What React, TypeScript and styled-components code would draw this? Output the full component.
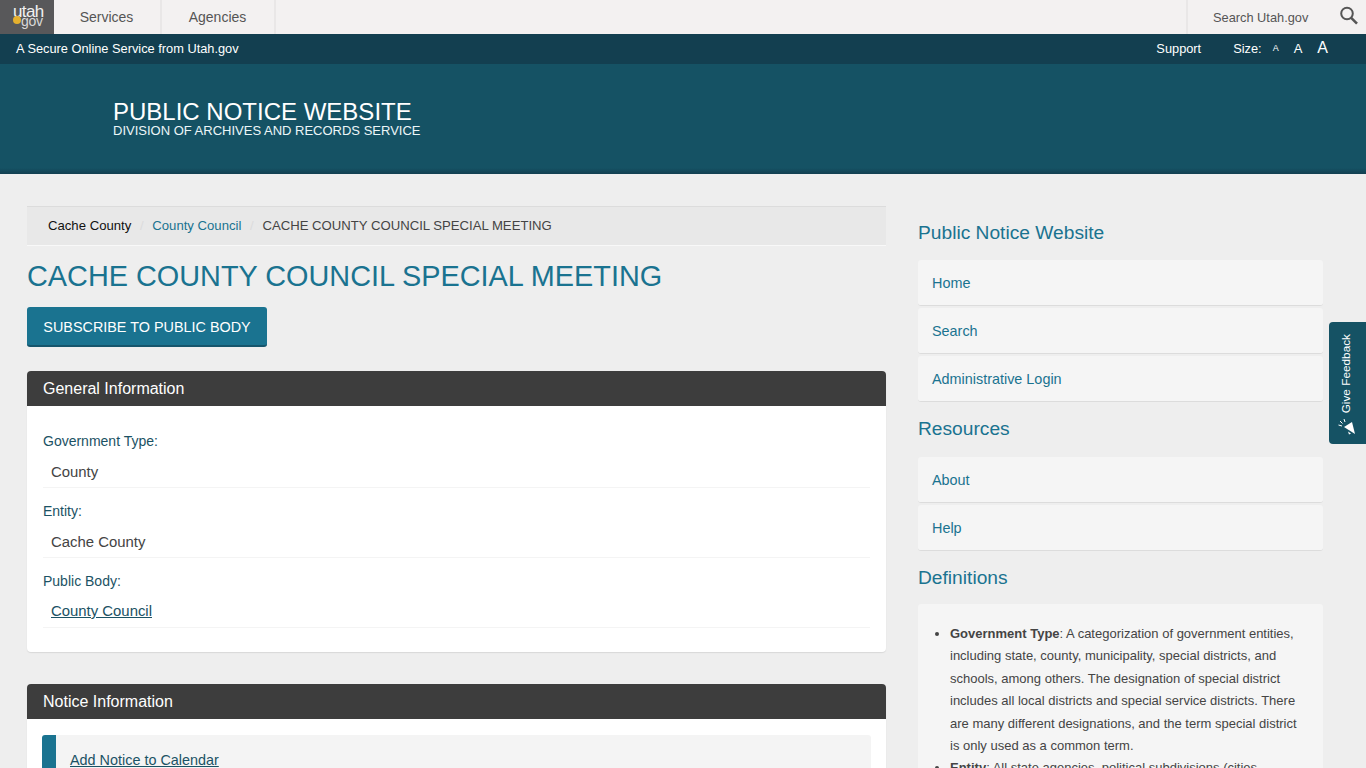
import React from "react";
import styled, { createGlobalStyle } from "styled-components";

const GlobalStyle = createGlobalStyle`
  html, body {
    margin: 0;
    height: 768px;
    overflow: hidden;
    background: #eeeeee;
    font-family: "Liberation Sans", Arial, sans-serif;
  }
  * { box-sizing: border-box; }
`;

const App = () => {
  return (
    <Page>
      <GlobalStyle />
      <TopBar>
        <LogoBox>
          <LogoUtah>utah</LogoUtah>
          <LogoGov>gov</LogoGov>
          <svg width="30" height="26" viewBox="0 0 30 26" aria-hidden="true">
            <circle cx="8" cy="17" r="4" fill="#e5b02e" />
          </svg>
        </LogoBox>
        <NavItem $width={108}>Services</NavItem>
        <NavItem $width={114}>Agencies</NavItem>
        <TopSpacer />
        <SearchBox>
          <span>Search Utah.gov</span>
          <svg width="20" height="20" viewBox="0 0 20 20" fill="none" stroke="#555" strokeWidth="2">
            <circle cx="8" cy="7.5" r="5.8" />
            <path d="M12.2 11.8 18 17.6" strokeWidth="2.6" />
          </svg>
        </SearchBox>
      </TopBar>
      <SecureBar>
        <span>A Secure Online Service from Utah.gov</span>
        <SecureRight>
          <span>Support</span>
          <SizeRow>
            <span>Size:</span>
            <SizeA $size={9} $left={11}>A</SizeA>
            <SizeA $size={13} $left={15}>A</SizeA>
            <SizeA $size={16} $left={15}>A</SizeA>
          </SizeRow>
        </SecureRight>
      </SecureBar>
      <Banner>
        <BannerTitle>PUBLIC NOTICE WEBSITE</BannerTitle>
        <BannerSub>DIVISION OF ARCHIVES AND RECORDS SERVICE</BannerSub>
      </Banner>

      <Columns>
        <MainCol>
          <Breadcrumb>
            <Crumb $tone="#111">Cache County</Crumb>
            <Slash>/</Slash>
            <Crumb $tone="#1a7390">County Council</Crumb>
            <Slash>/</Slash>
            <Crumb $tone="#444">CACHE COUNTY COUNCIL SPECIAL MEETING</Crumb>
          </Breadcrumb>
          <PageTitle>CACHE COUNTY COUNCIL SPECIAL MEETING</PageTitle>
          <SubscribeButton>SUBSCRIBE TO PUBLIC BODY</SubscribeButton>

          <Panel>
            <PanelHead>General Information</PanelHead>
            <PanelBody>
              <FieldLabel>Government Type:</FieldLabel>
              <FieldValue>County</FieldValue>
              <FieldLabel>Entity:</FieldLabel>
              <FieldValue>Cache County</FieldValue>
              <FieldLabel>Public Body:</FieldLabel>
              <FieldValue $raised>
                <PlainLink>County Council</PlainLink>
              </FieldValue>
            </PanelBody>
          </Panel>

          <Panel>
            <PanelHead>Notice Information</PanelHead>
            <NoticeBody>
              <Callout>
                <PlainLink>Add Notice to Calendar</PlainLink>
              </Callout>
            </NoticeBody>
          </Panel>
        </MainCol>

        <SideCol>
          <SideHeading $after={15}>Public Notice Website</SideHeading>
          <SideList>
            <SideLink>Home</SideLink>
            <SideLink>Search</SideLink>
            <SideLink>Administrative Login</SideLink>
          </SideList>
          <SideHeading $after={16}>Resources</SideHeading>
          <SideList>
            <SideLink>About</SideLink>
            <SideLink>Help</SideLink>
          </SideList>
          <SideHeading $after={14}>Definitions</SideHeading>
          <DefinitionCard>
            <DefinitionList>
              <li>
                <b>Government Type</b>: A categorization of government entities, including state, county,
                municipality, special districts, and schools, among others. The designation of special
                district includes all local districts and special service districts. There are many
                different designations, and the term special district is only used as a common term.
              </li>
              <li>
                <b>Entity</b>: All state agencies, political subdivisions (cities, counties, towns and
                special districts) that are subject to the act.
              </li>
            </DefinitionList>
          </DefinitionCard>
        </SideCol>
      </Columns>

      <FeedbackTab>
        <FeedbackText>Give Feedback</FeedbackText>
        <svg width="20" height="20" viewBox="0 0 20 20" aria-hidden="true">
          <path d="M6 9 14 4 17 16Z" fill="#fff" />
          <path d="M10 13.5 11 16.5 13 15.5" fill="#fff" />
          <path d="M2 3 4.5 5.5M.5 7 4 8M6 1 7 4" stroke="#fff" strokeWidth="1" />
        </svg>
      </FeedbackTab>
    </Page>
  );
};

export default App;

const Page = styled.div`
  position: relative;
  height: 768px;
  overflow: hidden;
  background: #eeeeee;
`;

const TopBar = styled.div`
  display: flex;
  height: 34px;
  background: #f3f1f1;
`;

const LogoBox = styled.div`
  position: relative;
  width: 54px;
  height: 34px;
  background: #58585a;
  color: #fff;
  svg {
    position: absolute;
    left: 9px;
    top: 3px;
  }
`;

const LogoUtah = styled.span`
  position: absolute;
  left: 13px;
  top: 3px;
  font-size: 17px;
  line-height: 17px;
  letter-spacing: -0.6px;
  color: #f1f1f1;
`;

const LogoGov = styled.span`
  position: absolute;
  left: 21px;
  top: 14px;
  font-size: 14px;
  line-height: 14px;
  letter-spacing: -0.3px;
  color: #d8d8d8;
`;

const NavItem = styled.div<{ $width: number }>`
  width: ${(p) => p.$width}px;
  display: flex;
  align-items: center;
  justify-content: center;
  padding-right: 1px;
  font-size: 14px;
  color: #555;
  border-right: 2px solid #e9e7e7;
`;

const TopSpacer = styled.div`
  flex: 1;
`;

const SearchBox = styled.div`
  width: 180px;
  display: flex;
  align-items: center;
  justify-content: space-between;
  padding: 0 7px 0 25px;
  font-size: 12.8px;
  color: #555;
  border-left: 2px solid #e9e7e7;
  svg {
    margin-bottom: 2px;
  }
`;

const SecureBar = styled.div`
  height: 30px;
  display: flex;
  align-items: center;
  justify-content: space-between;
  padding: 0 38px 2px 16px;
  background: #133f50;
  color: #fff;
  font-size: 12.8px;
`;

const SecureRight = styled.div`
  display: flex;
  align-items: center;
  gap: 32px;
`;

const SizeRow = styled.div`
  display: flex;
  align-items: center;
`;

const SizeA = styled.span<{ $size: number; $left: number }>`
  font-size: ${(p) => p.$size}px;
  margin-left: ${(p) => p.$left}px;
`;

const Banner = styled.div`
  height: 110px;
  padding: 35px 0 0 113px;
  background: linear-gradient(to bottom, #155264 0, #155264 104px, #123f50 110px);
  color: #fff;
`;

const BannerTitle = styled.div`
  font-size: 24px;
  line-height: 25px;
`;

const BannerSub = styled.div`
  font-size: 13px;
  line-height: 14px;
  color: #ecf6f8;
`;

const Columns = styled.div`
  display: flex;
  align-items: flex-start;
  gap: 32px;
  padding: 32px 0 0 27px;
`;

const MainCol = styled.div`
  width: 859px;
  flex: none;
`;

const SideCol = styled.div`
  width: 405px;
  flex: none;
`;

const Breadcrumb = styled.div`
  height: 40px;
  display: flex;
  align-items: center;
  padding: 0 0 2px 21px;
  background: #e8e8e8;
  border-top: 1px solid #dcdcdc;
  border-bottom: 1px solid #f8f8f8;
  font-size: 13.15px;
`;

const Crumb = styled.span<{ $tone: string }>`
  color: ${(p) => p.$tone};
`;

const Slash = styled.span`
  width: 21px;
  text-align: center;
  color: #dcdcdc;
`;

const PageTitle = styled.h1`
  margin: 14px 0 14px;
  font-size: 28.85px;
  line-height: 33px;
  font-weight: 400;
  color: #1a7390;
`;

const SubscribeButton = styled.button`
  display: block;
  width: 240px;
  height: 40px;
  padding: 1px 0 0;
  border: none;
  border-bottom: 2px solid #15556c;
  border-radius: 3px;
  background: #1a7390;
  color: #fff;
  font-family: inherit;
  font-size: 14.4px;
`;

const Panel = styled.section`
  margin-top: 24px;
  margin-bottom: 32px;
  background: #fff;
  border-radius: 4px;
  box-shadow: 0 1px 1px #d8d8d8;
`;

const PanelHead = styled.div`
  height: 35px;
  display: flex;
  align-items: center;
  padding-left: 16px;
  background: #3d3d3d;
  border-radius: 4px 4px 0 0;
  color: #fff;
  font-size: 16px;
`;

const PanelBody = styled.div`
  height: 246px;
  padding: 26px 16px 0;
`;

const NoticeBody = styled.div`
  padding: 16px 15px;
`;

const FieldLabel = styled.div`
  font-size: 14px;
  line-height: 18px;
  color: #1b5264;
`;

const FieldValue = styled.div<{ $raised?: boolean }>`
  height: 38px;
  padding: ${(p) => (p.$raised ? 6 : 7)}px 0 0 8px;
  margin-bottom: 14px;
  border-bottom: 1px solid #f4f4f4;
  font-size: 14.9px;
  line-height: 30px;
  color: #444;
`;

const PlainLink = styled.a`
  color: #1b5264;
  text-decoration: underline;
`;

const Callout = styled.div`
  height: 120px;
  padding: 16px 0 0 14px;
  background: #f4f4f4;
  border-left: 14px solid #1a7390;
  border-radius: 3px;
  font-size: 14.4px;
  line-height: 18px;
`;

const SideHeading = styled.h2<{ $after: number }>`
  margin: 15px 0 ${(p) => p.$after}px;
  font-size: 19.2px;
  line-height: 24px;
  font-weight: 400;
  color: #1a7390;
`;

const SideList = styled.div`
  display: flex;
  flex-direction: column;
  gap: 2px;
`;

const SideLink = styled.div`
  height: 46px;
  display: flex;
  align-items: center;
  padding: 0 14px;
  background: #f5f5f5;
  border-bottom: 1px solid #dcdcdc;
  border-radius: 3px;
  font-size: 14.4px;
  color: #1a7390;
`;

const DefinitionCard = styled.div`
  height: 200px;
  padding: 19px 14px;
  background: #f5f5f5;
  border-radius: 3px;
`;

const DefinitionList = styled.ul`
  margin: 0;
  padding: 0 0 0 18px;
  font-size: 13px;
  line-height: 22.4px;
  color: #444;
  li b { font-weight: 700; }
`;

const FeedbackTab = styled.div`
  position: absolute;
  left: 1329px;
  top: 322px;
  width: 37px;
  height: 122px;
  display: flex;
  flex-direction: column;
  align-items: center;
  justify-content: flex-end;
  gap: 5px;
  padding-bottom: 6px;
  background: #155264;
  border-radius: 4px 0 0 4px;
`;

const FeedbackText = styled.span`
  writing-mode: vertical-rl;
  transform: rotate(180deg);
  margin-right: 3px;
  font-size: 11.8px;
  color: #fff;
`;
